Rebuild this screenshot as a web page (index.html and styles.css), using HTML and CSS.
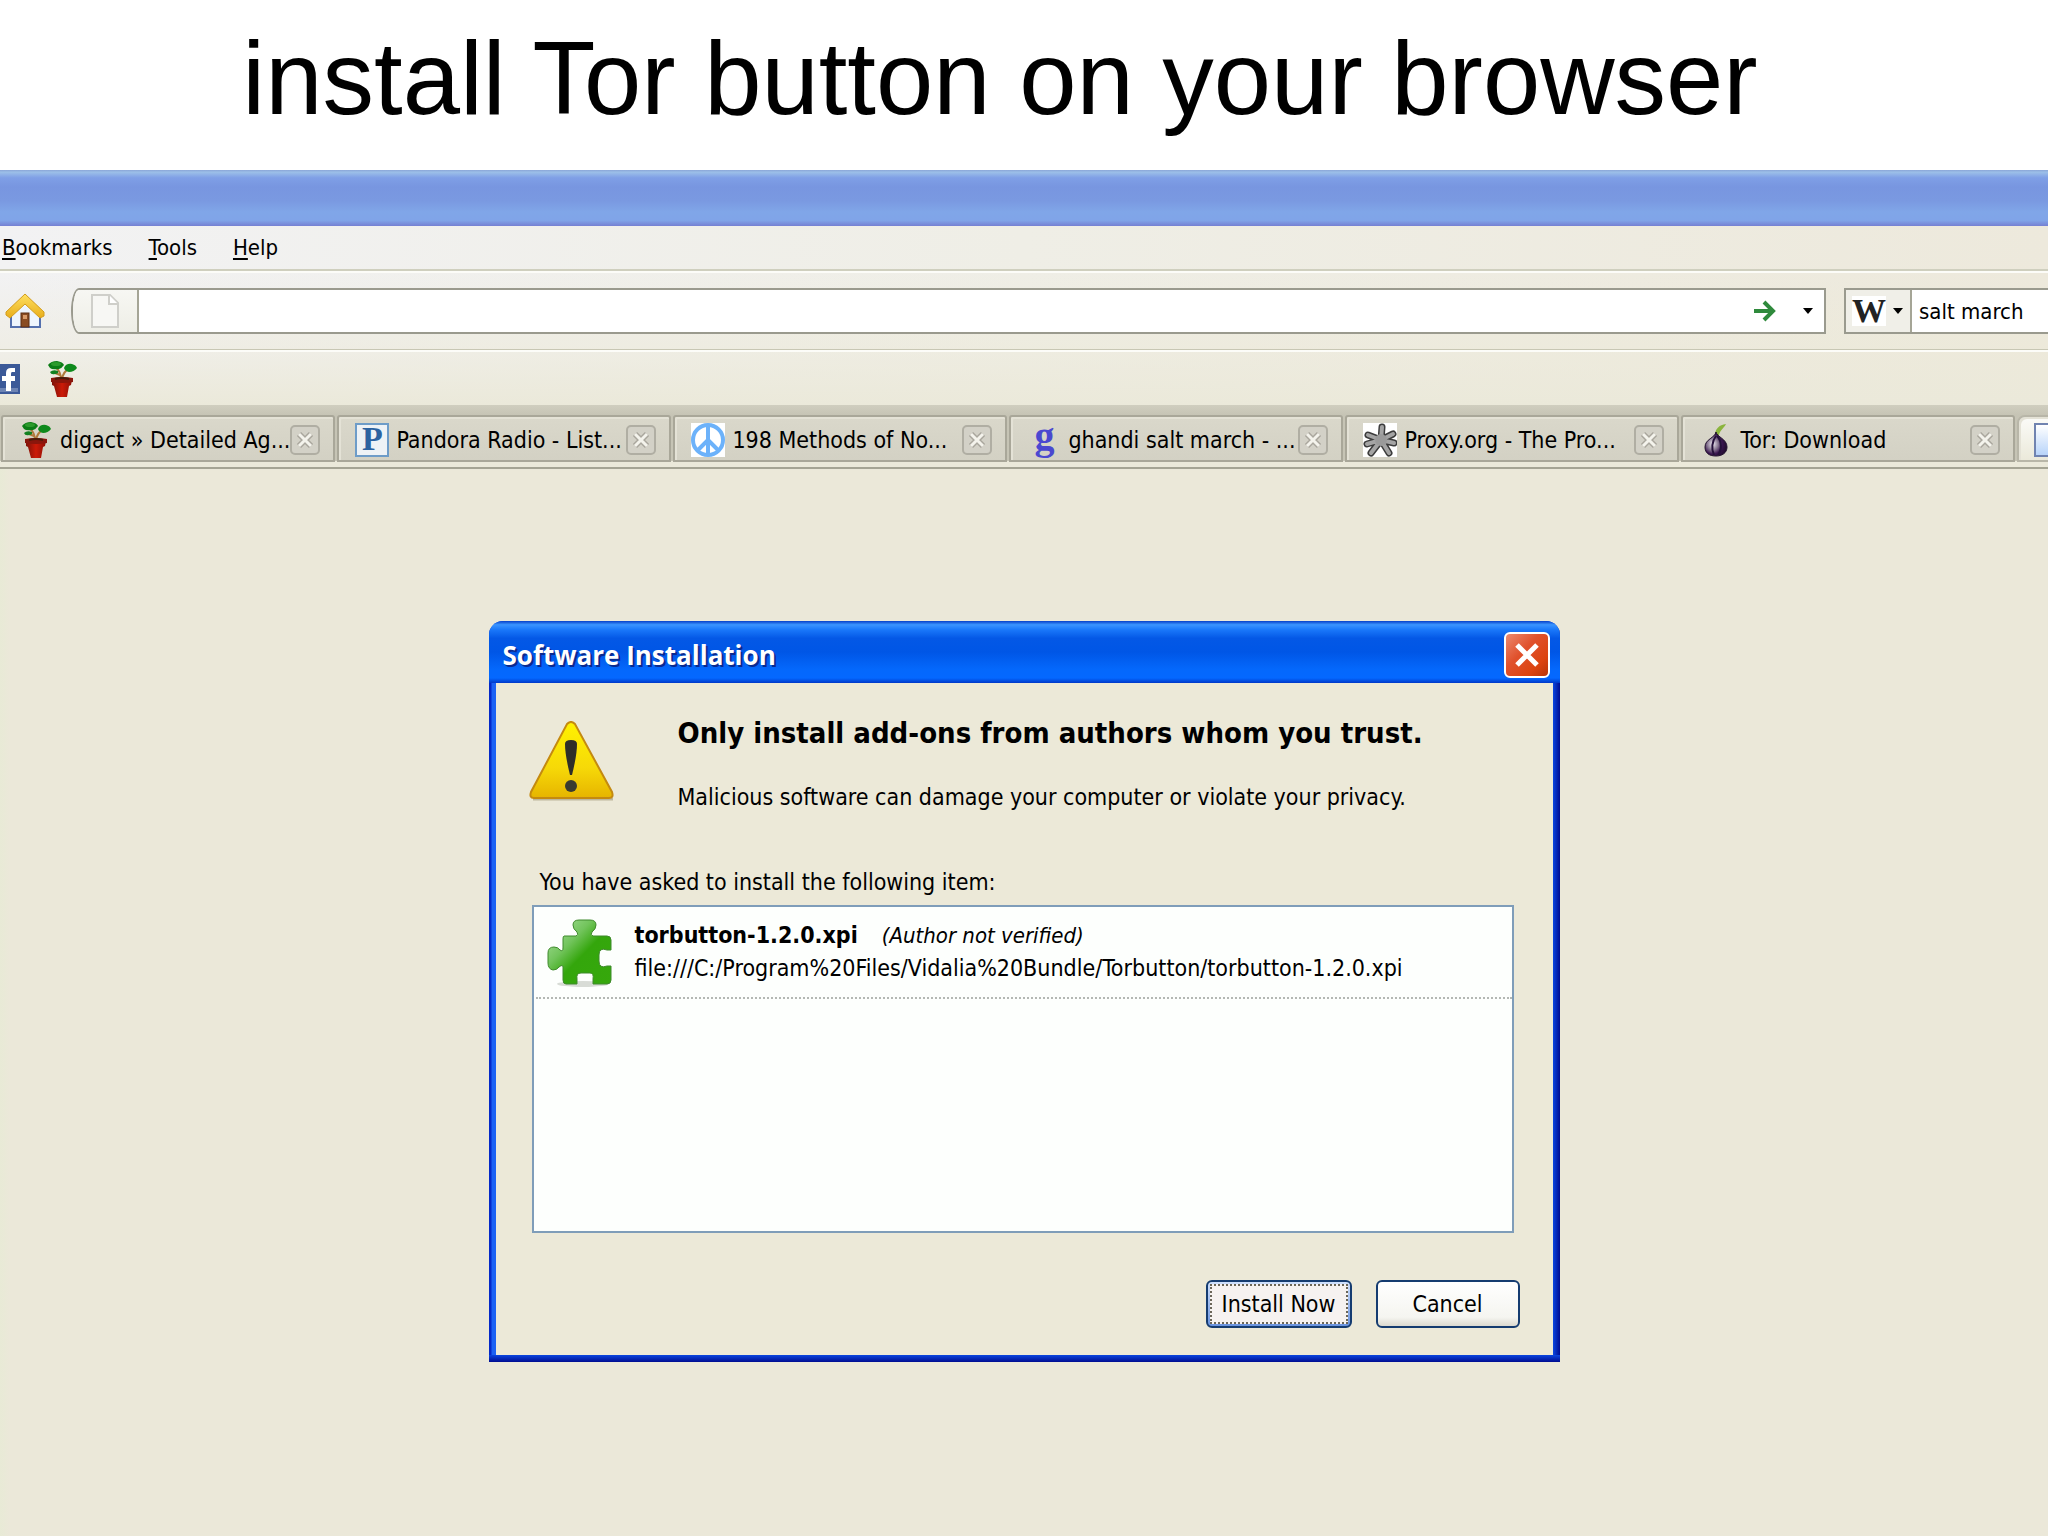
FILE: index.html
```html
<!DOCTYPE html>
<html lang="en">
<head>
    <meta charset="UTF-8">
    <meta name="viewport" content="width=device-width, initial-scale=1.0">
    <title>install Tor button on your browser</title>
    <link rel="stylesheet" href="styles.css">
</head>
<body>
    <!-- Shared drawings -->
    <svg class="defs" width="0" height="0" aria-hidden="true">
        <defs>
            <linearGradient id="pot-fill" x1="0" x2="1" y1="0" y2="0">
                <stop offset="0" stop-color="#7d1208"/>
                <stop offset="0.5" stop-color="#cc1a08"/>
                <stop offset="1" stop-color="#8c0f06"/>
            </linearGradient>
            <linearGradient id="roof-fill" x1="0" x2="0" y1="0" y2="1">
                <stop offset="0" stop-color="#ffe060"/>
                <stop offset="1" stop-color="#e8ae1c"/>
            </linearGradient>
            <linearGradient id="warn-fill" x1="0" x2="0" y1="0" y2="1">
                <stop offset="0" stop-color="#fff200"/>
                <stop offset="0.6" stop-color="#f6d908"/>
                <stop offset="1" stop-color="#e6b400"/>
            </linearGradient>
            <linearGradient id="puzzle-fill" x1="0" x2="1" y1="0" y2="1">
                <stop offset="0.1" stop-color="#9fdc92"/>
                <stop offset="0.35" stop-color="#72c45c"/>
                <stop offset="0.55" stop-color="#34a60c"/>
                <stop offset="1" stop-color="#36a80c"/>
            </linearGradient>
            <radialGradient id="onion-fill" cx="0.35" cy="0.5" r="0.7">
                <stop offset="0" stop-color="#f4eef8"/>
                <stop offset="0.35" stop-color="#8a7a94"/>
                <stop offset="0.6" stop-color="#3a1650"/>
                <stop offset="1" stop-color="#1c0a28"/>
            </radialGradient>
        </defs>
        <symbol id="plant" viewBox="0 0 30 36">
            <path d="M14 19C14 13 11 8 8 6M15 18C16 12 19 9 23 7M13 14L8 12" fill="none" stroke="#b07a3c" stroke-width="2"/>
            <path d="M1 4Q4 0 10 0Q16 1 17 4Q15 7 12 8Q5 9 3 7Z" fill="#0c7c16"/>
            <ellipse cx="9" cy="3" rx="5" ry="2" fill="#2c9a2c"/>
            <path d="M17 7Q19 2 25 3Q29 4 30 7Q27 11 22 11Q18 10 17 7Z" fill="#0e8a1c"/>
            <path d="M3 11Q6 8 11 10Q12 13 8 13Q4 14 3 11Z" fill="#118020"/>
            <path d="M5 19L25 19L24 24L22 25L20 36L10 36L7 25L5 24Z" fill="url(#pot-fill)"/>
            <path d="M4 17Q15 15 26 17V21Q15 23 4 21Z" fill="#8a160c"/>
            <path d="M8 18Q15 16 22 18" fill="none" stroke="#4c1c0a" stroke-width="2"/>
        </symbol>
        <symbol id="tab-x" viewBox="0 0 30 30">
            <rect x="1" y="1" width="28" height="28" rx="4" fill="#d3d1c7" stroke="#b0aea3" stroke-width="2"/>
            <path d="M9 9L21 21M21 9L9 21" stroke="#aaa79e" stroke-width="6"/>
            <path d="M9 9L21 21M21 9L9 21" stroke="#f4f3ec" stroke-width="3"/>
        </symbol>
    </svg>

    <header class="slide-title">
        <h1>install Tor button on your browser</h1>
    </header>

    <main class="browser">
        <div class="window-title"></div>

        <nav class="menu-bar">
            <button type="button"><u>B</u>ookmarks</button>
            <button type="button"><u>T</u>ools</button>
            <button type="button"><u>H</u>elp</button>
        </nav>

        <div class="nav-bar">
            <button type="button" class="home" aria-label="Home">
                <svg width="40" height="36" viewBox="0 0 40 36">
                    <path d="M6 18L20 7L35 18V34H6Z" fill="#eef5fd" stroke="#5470ae" stroke-width="2"/>
                    <rect x="16" y="20" width="8" height="14" fill="#8a4c22" stroke="#5c2e12"/>
                    <rect x="18" y="22" width="4" height="4" fill="#d89a68"/>
                    <path d="M20 1L39 19V23L35 25L20 11L5 25L1 22V19Z" fill="url(#roof-fill)" stroke="#d39c1c"/>
                </svg>
            </button>
            <div class="url-bar">
                <span class="site-icon">
                    <svg width="28" height="34" viewBox="0 0 28 34">
                        <path d="M1 1H19L27 9V33H1Z" fill="#f7f7f4" stroke="#cfcfca" stroke-width="2"/>
                        <path d="M18 1V10H27" fill="#fff" stroke="#cfcfca" stroke-width="2"/>
                    </svg>
                </span>
                <input type="text" aria-label="Address">
                <button type="button" class="go" aria-label="Go">
                    <svg width="22" height="22" viewBox="0 0 22 22">
                        <path d="M0 11H19M10 2L19 11L10 20" fill="none" stroke="#2f8a3c" stroke-width="4"/>
                    </svg>
                </button>
                <button type="button" class="drop" aria-label="History">
                    <svg width="10" height="6" viewBox="0 0 10 6"><path d="M0 0H10L5 6Z"/></svg>
                </button>
            </div>
            <div class="search-bar">
                <button type="button" class="engine" aria-label="Search engine">
                    <span class="wiki">W</span>
                    <svg width="10" height="6" viewBox="0 0 10 6"><path d="M0 0H10L5 6Z"/></svg>
                </button>
                <input type="text" value="salt march" aria-label="Search">
            </div>
        </div>

        <div class="bookmark-bar">
            <a href="#" aria-label="Facebook">
                <svg width="20" height="30" viewBox="0 0 20 30">
                    <rect width="20" height="30" fill="#3b5998"/>
                    <rect x="0" y="24" width="18" height="4" fill="#6d84b4"/>
                    <path d="M6 27V17H2V12H6V9Q6 4 11 4H15V8H12Q11 8 11 10V12H15V17H11V27Z" fill="#fff"/>
                </svg>
            </a>
            <a href="#" aria-label="digact"><svg width="30" height="36"><use href="#plant"/></svg></a>
        </div>

        <div class="tab-strip">
            <div class="tab">
                <span class="tab-icon"><svg width="30" height="36"><use href="#plant"/></svg></span>
                <span class="tab-label">digact » Detailed Ag...</span>
                <button type="button" aria-label="Close tab"><svg width="30" height="30"><use href="#tab-x"/></svg></button>
            </div>
            <div class="tab">
                <span class="tab-icon"><span class="pandora">P</span></span>
                <span class="tab-label">Pandora Radio - List...</span>
                <button type="button" aria-label="Close tab"><svg width="30" height="30"><use href="#tab-x"/></svg></button>
            </div>
            <div class="tab">
                <span class="tab-icon">
                    <svg width="34" height="34" viewBox="0 0 34 34">
                        <rect width="34" height="34" fill="#fff"/>
                        <circle cx="17" cy="17" r="15" fill="none" stroke="#6cb2fa" stroke-width="4"/>
                        <path d="M17 2V32M17 17L6 28M17 17L28 28" stroke="#6cb2fa" stroke-width="4"/>
                    </svg>
                </span>
                <span class="tab-label">198 Methods of No...</span>
                <button type="button" aria-label="Close tab"><svg width="30" height="30"><use href="#tab-x"/></svg></button>
            </div>
            <div class="tab">
                <span class="tab-icon"><span class="google">g</span></span>
                <span class="tab-label">ghandi salt march - ...</span>
                <button type="button" aria-label="Close tab"><svg width="30" height="30"><use href="#tab-x"/></svg></button>
            </div>
            <div class="tab">
                <span class="tab-icon">
                    <svg width="34" height="34" viewBox="0 0 34 34">
                        <rect width="34" height="34" fill="#fff"/>
                        <path d="M18 17L19 4M18 17L30 11M18 17L5 12M18 17L31 20M18 17L4 21M18 17L8 30M18 17L26 30" stroke="#3c3c3c" stroke-width="7" stroke-linecap="round"/>
                        <path d="M18 17L19 4M18 17L30 11M18 17L5 12M18 17L31 20M18 17L4 21M18 17L8 30M18 17L26 30" stroke="#a4a4a4" stroke-width="4" stroke-linecap="round"/>
                        <circle cx="18" cy="17" r="6" fill="#9a9a9a"/>
                    </svg>
                </span>
                <span class="tab-label">Proxy.org - The Pro...</span>
                <button type="button" aria-label="Close tab"><svg width="30" height="30"><use href="#tab-x"/></svg></button>
            </div>
            <div class="tab">
                <span class="tab-icon">
                    <svg width="24" height="34" viewBox="0 0 24 34">
                        <path d="M11 12C11 6 15 2 22 1C20 5 16 7 15 12Z" fill="#8ab43c"/>
                        <path d="M12 9C13 14 23 16 23 24C23 30 18 33 12 33C5 33 1 30 1 24C1 16 11 15 12 9Z" fill="url(#onion-fill)" stroke="#22122e"/>
                        <path d="M12 13C8 18 7 26 10 32M13 13C18 18 18 27 14 32" fill="none" stroke="#24103a" stroke-width="2"/>
                    </svg>
                </span>
                <span class="tab-label">Tor: Download</span>
                <button type="button" aria-label="Close tab"><svg width="30" height="30"><use href="#tab-x"/></svg></button>
            </div>
            <div class="tab active">
                <span class="blank-page"></span>
            </div>
        </div>

        <section class="page">
            <div class="dialog" role="dialog" aria-labelledby="dialog-title">
                <div class="dialog-title">
                    <h2 id="dialog-title">Software Installation</h2>
                    <button type="button" class="close-button" aria-label="Close">
                        <svg width="24" height="26" viewBox="0 0 24 26">
                            <path d="M2 3L22 23M22 3L2 23" stroke="#fff" stroke-width="5"/>
                        </svg>
                    </button>
                </div>
                <div class="dialog-body">
                    <div class="warning">
                        <svg width="88" height="80" viewBox="0 0 88 80">
                            <path d="M5 78H85" stroke="#bdb79c" stroke-width="3"/>
                            <path d="M39 3Q43 -1 47 3L84 71Q86 77 81 77H6Q1 77 3 71Z" fill="url(#warn-fill)" stroke="#c48a10" stroke-width="2"/>
                            <path d="M37 23Q37 19 43 19Q49 19 49 23Q49 34 44 54H42Q37 34 37 23Z" fill="#2e2e28"/>
                            <circle cx="43" cy="65" r="6" fill="#3a3a30"/>
                        </svg>
                        <div class="warning-text">
                            <h3>Only install add-ons from authors whom you trust.</h3>
                            <p>Malicious software can damage your computer or violate your privacy.</p>
                        </div>
                    </div>
                    <p class="asked">You have asked to install the following item:</p>
                    <ul class="addons">
                        <li>
                            <svg width="66" height="68" viewBox="0 0 66 68">
                                <ellipse cx="36" cy="65" rx="26" ry="3" fill="#d8dcd6"/>
                                <path d="M17 17H29Q32 16 30 13Q26 10 26 6Q26 1 32 1H43Q49 1 49 6Q49 10 45 13Q43 16 46 17H60Q64 17 64 21V31H60Q52 28 52 36V42Q52 50 60 47H64V61Q64 65 60 65H46V60Q47 54 43 54H34Q29 54 30 60V65H19Q16 65 16 61V48Q16 45 12 48Q10 51 6 51Q1 50 1 44V34Q1 28 7 28Q11 28 13 31Q16 33 16 29V20Q16 17 17 17Z" fill="url(#puzzle-fill)" stroke="#3f8a2c"/>
                            </svg>
                            <div>
                                <p><strong>torbutton-1.2.0.xpi</strong><em>(Author not verified)</em></p>
                                <p>file:///C:/Program%20Files/Vidalia%20Bundle/Torbutton/torbutton-1.2.0.xpi</p>
                            </div>
                        </li>
                    </ul>
                    <div class="buttons">
                        <button type="button" class="btn default"><span>Install Now</span></button>
                        <button type="button" class="btn"><span>Cancel</span></button>
                    </div>
                </div>
            </div>
        </section>
    </main>
</body>
</html>
```
FILE: styles.css
```css
* {
    box-sizing: border-box;
}

body {
    margin: 0;
    min-height: 100vh;
    display: flex;
    flex-direction: column;
    overflow: hidden;
    background: #ffffff;
    color: #000000;
    font-family: "DejaVu Sans Condensed", "DejaVu Sans", sans-serif;
    font-size: 22px;
}

h1, h2, h3, p, ul {
    margin: 0;
    padding: 0;
}

button, input {
    font: inherit;
    color: inherit;
    padding: 0;
    border: none;
    background: none;
}

svg {
    display: block;
    flex-shrink: 0;
}

.defs {
    position: absolute;
}

/* Slide heading */
.slide-title {
    padding: 0 48px 12px 0;
    text-align: center;
}

.slide-title h1 {
    font-family: "Liberation Sans", Arial, sans-serif;
    font-size: 103px;
    font-weight: normal;
    line-height: 158px;
}

/* Browser window */
.browser {
    flex: 1;
    display: flex;
    flex-direction: column;
    background: linear-gradient(to right, #f2f2f3, #efeee6 50%, #ede9dc);
}

.window-title {
    height: 56px;
    background: linear-gradient(#8ba6d8, #9cbfe8 4%, #7f9fe6 14%, #7896e0 30%, #7a99e1 55%, #80a6e8 75%, #80a4e8 90%, #7580d2);
}

.menu-bar {
    height: 45px;
    display: flex;
    align-items: center;
    gap: 36px;
    padding-left: 2px;
    border-bottom: 2px solid #cfcfbe;
}

.menu-bar u {
    text-underline-offset: 3px;
}

.nav-bar {
    height: 79px;
    display: flex;
    align-items: center;
    padding-left: 5px;
    border-top: 2px solid #fcfcf8;
    border-bottom: 1px solid #c8c7b4;
    background: linear-gradient(rgba(236, 233, 216, 0), rgba(236, 233, 216, 0.5));
}

.url-bar {
    flex: 1;
    height: 46px;
    display: flex;
    align-items: center;
    margin: 0 18px 0 26px;
    border: 2px solid #9a9a8e;
    border-radius: 8px 0 0 8px / 23px 0 0 23px;
    background: #ffffff;
    overflow: hidden;
}

.url-bar input {
    flex: 1;
    min-width: 0;
}

.site-icon {
    width: 66px;
    height: 42px;
    display: flex;
    align-items: center;
    justify-content: center;
    border-right: 2px solid #a5a596;
    background: linear-gradient(#f7f7f3, #eeeee6);
}

.drop {
    margin: 0 11px 0 27px;
}

.search-bar {
    width: 204px;
    height: 46px;
    display: flex;
    border: 2px solid #9a9a8e;
    border-right: none;
    background: #ffffff;
}

.search-bar input {
    flex: 1;
    min-width: 0;
    padding-left: 7px;
}

.engine {
    width: 66px;
    display: flex;
    align-items: center;
    gap: 7px;
    padding-left: 6px;
    border-right: 2px solid #a5a596;
    background: #f0efe8;
}

.wiki {
    width: 34px;
    background: #ffffff;
    color: #222222;
    font-family: "Liberation Serif", serif;
    font-size: 34px;
    font-weight: bold;
    line-height: 30px;
}

.bookmark-bar {
    height: 55px;
    display: flex;
    align-items: center;
    gap: 27px;
    border-top: 2px solid #fcfcf8;
    background: linear-gradient(rgba(236, 233, 216, 0.4), #ebe9da);
}

/* Tabs */
.tab-strip {
    height: 64px;
    display: flex;
    gap: 2px;
    padding: 10px 0 5px 1px;
    border-bottom: 2px solid #a5a494;
    background: linear-gradient(#d0cebf, #c6c4b5 10px, #c6c4b5 56px, #ebe9da 56px);
    overflow: hidden;
}

.tab {
    flex: 0 0 334px;
    display: flex;
    align-items: center;
    padding: 2px 13px 0 15px;
    border: 2px solid #a9a799;
    border-radius: 3px 3px 0 0;
    background: linear-gradient(#dad8cb, #d3d1c4);
    box-shadow: inset 2px 2px 0 #e4e2d6;
    font-size: 23px;
}

.tab-icon {
    width: 36px;
    display: flex;
    justify-content: center;
}

.tab-label {
    flex: 1;
    min-width: 0;
    padding-left: 6px;
    white-space: nowrap;
}

.pandora {
    width: 34px;
    height: 34px;
    border: 2px solid #6e9cc8;
    background: #eef2f6;
    color: #2c62a0;
    font-family: "Liberation Serif", serif;
    font-weight: bold;
    font-size: 34px;
    line-height: 28px;
    text-align: center;
}

.google {
    padding-bottom: 8px;
    color: #4a48d0;
    font-family: "Liberation Serif", serif;
    font-weight: bold;
    font-size: 40px;
    line-height: 30px;
}

.tab.active {
    border-color: #b8b6a8;
    border-radius: 8px 0 0 0;
    background: linear-gradient(#fbfbf8, #ebe9da);
}

.blank-page {
    width: 28px;
    height: 34px;
    border: 2px solid #7083b0;
    background: linear-gradient(#ffffff, #b8d4fa);
}

/* Page area */
.page {
    flex: 1;
    display: flex;
    justify-content: center;
    align-items: flex-start;
    padding-top: 152px;
    background: linear-gradient(to right, #e8ead6, #ebe8d9 10px);
}

.dialog {
    width: 100%;
    max-width: 1071px;
    border-radius: 14px 14px 0 0;
    background:
        linear-gradient(#0a46e0, #000c90) bottom / 100% 7px no-repeat,
        linear-gradient(to right, #0428c8 2px, #1c62f4 3px, #1c62f4 7px, #0a46e0 calc(100% - 7px), #000c90);
    overflow: hidden;
}

.dialog-title {
    height: 62px;
    display: flex;
    align-items: center;
    justify-content: space-between;
    padding: 5px 10px 0 14px;
    background: linear-gradient(#0640c8, #3a94ff 6%, #1a78fa 14%, #0458e6 28%, #0056e6 50%, #0468fc 78%, #0468ff 92%, #0038c8);
}

.dialog-title h2 {
    color: #ffffff;
    font-family: "Open Sans", sans-serif;
    font-size: 26px;
    font-weight: bold;
    text-shadow: 2px 2px 0 #0a2a90;
}

.close-button {
    width: 46px;
    height: 46px;
    display: flex;
    align-items: center;
    justify-content: center;
    border: 2px solid #ffffff;
    border-radius: 6px;
    background: linear-gradient(135deg, #ec8a70, #e0512c 40%, #dc4410 75%, #b83408);
}

.dialog-body {
    margin: 0 7px 7px;
    padding: 34px 33px 27px 32px;
    background: #ece9d8;
    font-size: 23px;
}

.warning {
    display: flex;
    gap: 62px;
}

.warning svg {
    margin-top: 4px;
}

.warning h3 {
    font-size: 29px;
    line-height: 32px;
}

.warning-text p {
    margin-top: 32px;
    line-height: 32px;
}

.asked {
    margin: 53px 0 7px 12px;
    line-height: 32px;
}

.addons {
    height: 328px;
    margin: 0 6px 0 4px;
    padding: 0 0 0 2px;
    border: 2px solid #7f9db9;
    background: #fdfffd;
    list-style: none;
}

.addons li {
    display: flex;
    gap: 22px;
    padding: 12px 0 10px 11px;
    border-bottom: 2px dotted #b4b8b4;
    line-height: 33px;
}

.addons strong {
    margin-right: 24px;
}

.addons em {
    font-size: 22px;
}

.buttons {
    display: flex;
    justify-content: flex-end;
    gap: 24px;
    margin-top: 47px;
}

.btn {
    width: 144px;
    height: 48px;
    border: 2px solid #153c70;
    border-radius: 6px;
    padding: 2px;
    background: linear-gradient(#ffffff, #f5f5f0 80%, #dcdad0);
}

.btn span {
    display: block;
    line-height: 36px;
}

.btn.default {
    width: 146px;
    background: linear-gradient(#cfe0fc, #6a94e0);
}

.btn.default span {
    border: 2px dotted #6b6658;
    background: #f6f2f0;
}
```
